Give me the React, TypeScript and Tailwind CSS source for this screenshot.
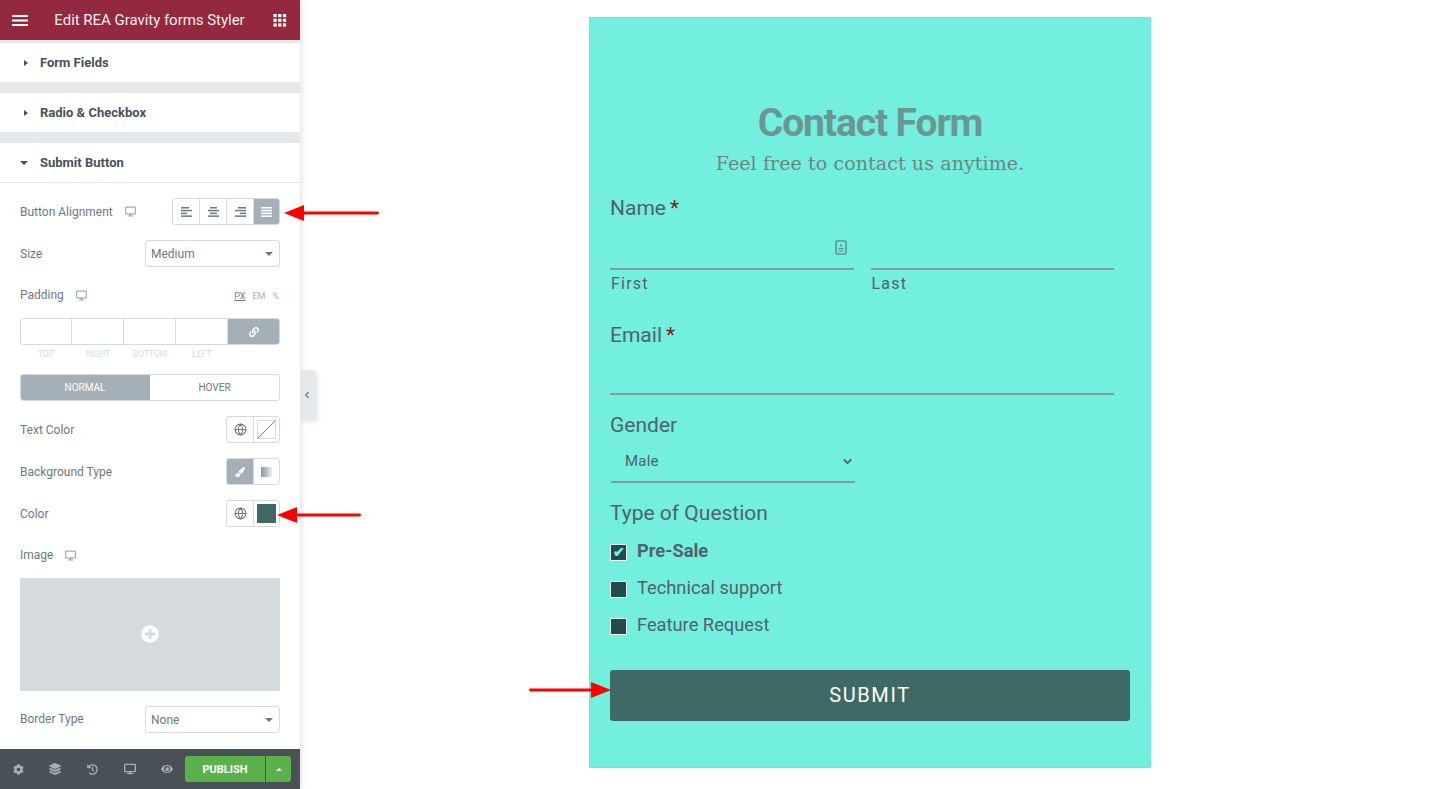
import React from "react";
import { FaDesktop, FaCog, FaLayerGroup, FaHistory, FaEye, FaLink, FaPaintBrush, FaPlusCircle } from "react-icons/fa";
import { Globe, ChevronLeft, ChevronDown } from "lucide-react";

const Caret = () => <span className="block w-0 h-0 border-x-[4px] border-x-transparent border-t-[4px] border-t-[#6d7882]" />;

const Section = ({ title, open }: { title: string; open?: boolean }) => (
  <div className={`h-[39px] bg-white flex items-center pl-[20px] ${open ? "" : "mb-[11px]"}`}>
    <span className="w-[20px] flex items-center">
      {open ? (
        <span className="block w-0 h-0 border-x-[4px] border-x-transparent border-t-[4px] border-t-[#495157]" />
      ) : (
        <span className="block ml-[4px] w-0 h-0 border-y-[3.5px] border-y-transparent border-l-[4px] border-l-[#495157]" />
      )}
    </span>
    <span className="text-[13px] leading-[40px] pt-px font-bold text-[#495157]">{title}</span>
  </div>
);

const Label = ({ children, mt }: { children: React.ReactNode; mt?: boolean }) => (
  <span className="text-[12px] text-[#6d7882] flex items-center">
    {children}
    {mt && <FaDesktop className="ml-[12px] text-[#a4afb7]" size={11} />}
  </span>
);

const AlignIcon = ({ type, color }: { type: string; color: string }) => {
  const rows =
    type === "left" ? [[0, 8], [0, 11], [0, 6], [0, 11]]
    : type === "center" ? [[2, 7], [0, 11], [2, 7], [0, 11]]
    : type === "right" ? [[3, 8], [0, 11], [5, 6], [0, 11]]
    : [[0, 11], [0, 11], [0, 11], [0, 11]];
  return (
    <svg width="11" height="10" viewBox="0 0 11 10">
      {rows.map((r, i) => (
        <rect key={i} x={r[0]} y={i * 2.8} width={r[1]} height="1.5" fill={color} />
      ))}
    </svg>
  );
};

const SelectBox = ({ value }: { value: string }) => (
  <div className="w-[135px] h-[27px] border border-[#d5dadf] rounded-[3px] flex items-center justify-between pl-[5px] pr-[6px] text-[12px] text-[#6d7882]">
    <span>{value}</span>
    <Caret />
  </div>
);

const Arrow = ({ className, left, width }: { className: string; left?: boolean; width: number }) => (
  <svg className={`absolute ${className}`} width={width} height="20" viewBox={`0 0 ${width} 20`}>
    {left ? (
      <>
        <path d={`M0 10 L20 2 L20 18 Z`} fill="#ff0000" />
        <rect x="18" y="8.6" width={width - 18} height="2.8" rx="1.4" fill="#ff0000" />
      </>
    ) : (
      <>
        <rect x="0" y="8.6" width={width - 18} height="2.8" rx="1.4" fill="#ff0000" />
        <path d={`M${width} 10 L${width - 20} 2 L${width - 20} 18 Z`} fill="#ff0000" />
      </>
    )}
  </svg>
);

const PairBox = ({ left, right, leftActive }: { left: React.ReactNode; right: React.ReactNode; leftActive?: boolean }) => (
  <div className="w-[54px] h-[27px] border border-[#d5dadf] rounded-[3px] flex overflow-hidden">
    <div className={`w-[27px] flex items-center justify-center border-r border-[#d5dadf] ${leftActive ? "bg-[#a4afb7]" : ""}`}>{left}</div>
    <div className="flex-1 flex items-center justify-center">{right}</div>
  </div>
);

const Row = ({ className, children }: { className: string; children: React.ReactNode }) => (
  <div className={`flex items-center justify-between ${className}`}>{children}</div>
);

const Sidebar = () => (
  <aside className="relative w-[300px] h-[789px] shrink-0 flex flex-col bg-white shadow-[2px_0_5px_rgba(0,0,0,0.1)]">
    <header className="h-[40px] bg-[#93283e] flex items-center justify-between pl-[12px] pr-[13px] text-white">
      <svg width="17" height="13" viewBox="0 0 17 13" fill="#fff">
        <rect y="1" width="16" height="2" />
        <rect y="5.5" width="16" height="2" />
        <rect y="10" width="16" height="2" />
      </svg>
      <span className="text-[15px] tracking-[-0.03px] text-white/95 mr-[3px]">Edit REA Gravity forms Styler</span>
      <svg width="14" height="13" viewBox="0 0 14 13" fill="#fff">
        {[0, 4.7, 9.4].map((y) =>
          [0.5, 5.2, 9.9].map((x) => <rect key={`${x}-${y}`} x={x} y={y} width="3.2" height="3.2" />)
        )}
      </svg>
    </header>
    <div className="flex-1 bg-[#e6e9ec] pt-[3px] overflow-hidden">
      <Section title="Form Fields" />
      <Section title="Radio & Checkbox" />
      <Section title="Submit Button" open />
      <div className="bg-white h-full border-t border-[#e6e9ec] px-[20px]">
        <Row className="h-[27px] mt-[15px]">
          <Label mt>Button Alignment</Label>
          <div className="w-[108px] h-[27px] border border-[#d5dadf] rounded-[3px] flex overflow-hidden">
            {["left", "center", "right"].map((t) => (
              <div key={t} className="w-[27px] flex items-center justify-center border-r border-[#d5dadf]">
                <AlignIcon type={t} color="#6d7882" />
              </div>
            ))}
            <div className="flex-1 bg-[#a4afb7] flex items-center justify-center">
              <AlignIcon type="justify" color="#ffffff" />
            </div>
          </div>
        </Row>
        <Row className="h-[27px] mt-[15px]">
          <Label>Size</Label>
          <SelectBox value="Medium" />
        </Row>
        <Row className="h-[16px] mt-[20px]">
          <Label mt>Padding</Label>
          <span className="flex gap-[7px] text-[9px] text-[#a4afb7] pr-[1px] mt-[3px]">
            <span className="text-[#6d7882] underline">PX</span>
            <span>EM</span>
            <span>%</span>
          </span>
        </Row>
        <div className="mt-[15px] h-[27px] flex border border-[#d5dadf] rounded-[3px] overflow-hidden">
          <div className="w-[51px] border-r border-[#d5dadf]" />
          {[0, 1, 2].map((i) => (
            <div key={i} className="w-[52px] border-r border-[#d5dadf]" />
          ))}
          <div className="flex-1 bg-[#a4afb7] flex items-center justify-center">
            <FaLink size={10} color="#fff" />
          </div>
        </div>
        <div className="flex mt-[4px] h-[10px] text-[8.5px] leading-[10px] text-[#d5dadf] text-center">
          {["TOP", "RIGHT", "BOTTOM", "LEFT"].map((l) => (
            <span key={l} className="w-[52px]">{l}</span>
          ))}
        </div>
        <div className="mt-[15px] h-[27px] flex border border-[#d5dadf] rounded-[3px] overflow-hidden text-[10px] leading-none">
          <div className="w-[130px] -m-px mr-0 bg-[#a4afb7] text-white flex items-center justify-center">NORMAL</div>
          <div className="flex-1 flex items-center justify-center text-[#6d7882]">HOVER</div>
        </div>
        <Row className="h-[27px] mt-[15px]">
          <Label>Text Color</Label>
          <PairBox
            left={<Globe size={13} color="#6d7882" />}
            right={
              <svg width="19" height="19" viewBox="0 0 19 19">
                <rect x="0.5" y="0.5" width="18" height="18" fill="#fff" stroke="#d5dadf" />
                <path d="M0.6 18 L18 0.6 L18.4 1 L1 18.4 Z" fill="#ff1a1a" />
              </svg>
            }
          />
        </Row>
        <Row className="h-[27px] mt-[15px]">
          <Label>Background Type</Label>
          <PairBox
            leftActive
            left={<FaPaintBrush size={10} color="#fff" />}
            right={<span className="block w-[11px] h-[10px] bg-gradient-to-r from-[#8a949c] to-[#eef0f2]" />}
          />
        </Row>
        <Row className="h-[27px] mt-[15px]">
          <Label>Color</Label>
          <PairBox
            left={<Globe size={13} color="#6d7882" />}
            right={<span className="block w-[19px] h-[19px] bg-[#3f6964]" />}
          />
        </Row>
        <div className="mt-[20px] h-[16px] flex items-center">
          <Label mt>Image</Label>
        </div>
        <div className="mt-[15px] h-[113px] bg-[#d5dadf] flex items-center justify-center pb-[2px]">
          <FaPlusCircle size={18} color="#fff" />
        </div>
        <Row className="h-[27px] mt-[15px]">
          <span className="-mt-[2px]"><Label>Border Type</Label></span>
          <SelectBox value="None" />
        </Row>
      </div>
    </div>
    <footer className="h-[40px] bg-[#495157] flex items-center text-[#a4afb7] pl-[13px]">
      <span className="w-[36px]"><FaCog size={11} /></span>
      <span className="w-[38px]"><FaLayerGroup size={12} /></span>
      <span className="w-[37px]"><FaHistory size={11} /></span>
      <span className="w-[37px]"><FaDesktop size={12} /></span>
      <span className="w-[24px]"><FaEye size={12} /></span>
      <div className="w-[106px] h-[26px] flex rounded-[3px] overflow-hidden bg-[#5cb24a] text-white">
        <div className="w-[81px] flex items-center justify-center pt-[2px] text-[11px] font-bold border-r border-[#495157]">PUBLISH</div>
        <div className="flex-1 flex items-center justify-center">
          <span className="block w-0 h-0 border-x-[3.5px] border-x-transparent border-b-[3.5px] border-b-white" />
        </div>
      </div>
    </footer>
    <Arrow className="left-[284px] top-[203px]" left width={95} />
    <Arrow className="left-[277px] top-[505px]" left width={84} />
    <div className="absolute left-[301px] top-[370px] w-[15px] h-[50px] bg-[#e6e9ec] rounded-r-[3px] shadow-[2px_2px_4px_rgba(0,0,0,0.1)] flex items-center justify-center pr-[3px]">
      <ChevronLeft size={10} strokeWidth={3} color="#6d7882" />
    </div>
  </aside>
);

const FieldLabel = ({ children, star }: { children: React.ReactNode; star?: boolean }) => (
  <div className="text-[21px] leading-[26px] text-[#50636a]">
    {children}
    {star && <span className="text-[#7a1f22] ml-[4px]">*</span>}
  </div>
);

const Check = ({ label, checked }: { label: string; checked?: boolean }) => (
  <div className="flex items-center h-[24px]">
    <span className="mt-[2px] w-[17px] h-[17px] bg-[#224c4c] border border-[#eef4f2] flex items-center justify-center text-[#72efdd] text-[14px] leading-none font-bold">
      {checked ? "✔" : ""}
    </span>
    <span className={`ml-[10px] text-[18.3px] text-[#50636a] ${checked ? "font-bold" : ""}`}>{label}</span>
  </div>
);

const Form = () => (
  <div className="ml-[289px] mt-[17px] w-[562px] h-[751px] shrink-0 bg-[#72efdd] border border-[#74dfec] px-[20px] font-['Roboto',sans-serif]">
    <h1 className="mt-[82px] text-center text-[39px] leading-[46px] font-bold tracking-[-1.1px] text-[#6b9793]">Contact Form</h1>
    <p className="mt-[5px] text-center text-[19px] leading-[24px] text-[#6f8585] font-['DejaVu_Serif',serif] tracking-[0.1px]">Feel free to contact us anytime.</p>
    <div className="mt-[20px]"><FieldLabel star>Name</FieldLabel></div>
    <div className="flex gap-[17px] mt-[25px] w-[504px]">
      <div className="w-[243.5px] relative">
        <div className="h-[22px] border-b-2 border-[#7f9e9b] box-content" />
        <svg className="absolute right-[7px] top-[-6px]" width="12" height="15" viewBox="0 0 12 15">
          <rect x="1" y="1" width="10" height="13" rx="1" fill="none" stroke="#5f9490" strokeWidth="1.6" />
          <path d="M6 3.5 L7.4 6.5 L4.6 6.5 Z M3.4 8 H8.6 V9.2 H3.4 Z M3.4 10.4 H8.6 V11.6 H3.4 Z" fill="#5f9490" />
        </svg>
        <div className="mt-[4px] text-[16px] leading-[20px] tracking-[1.2px] text-[#50636a] pl-px">First</div>
      </div>
      <div className="w-[243.5px]">
        <div className="h-[22px] border-b-2 border-[#7f9e9b] box-content" />
        <div className="mt-[4px] text-[16px] leading-[20px] tracking-[1.2px] text-[#50636a] pl-px">Last</div>
      </div>
    </div>
    <div className="mt-[28px]"><FieldLabel star>Email</FieldLabel></div>
    <div className="mt-[24px] w-[504px] h-[23px] border-b-2 border-[#7f9e9b]" />
    <div className="mt-[17px]"><FieldLabel>Gender</FieldLabel></div>
    <div className="mt-[11px] ml-px w-[244px] h-[34px] border-b-2 border-[#7f9e9b] flex items-center justify-between pl-[14px] pr-px pb-[8px] text-[15px] tracking-[0.2px] text-[#50636a]">
      <span>Male</span>
      <ChevronDown size={13} strokeWidth={3.5} color="#50636a" />
    </div>
    <div className="mt-[17px]"><FieldLabel>Type of Question</FieldLabel></div>
    <div className="mt-[13px] flex flex-col gap-[13px]">
      <Check label="Pre-Sale" checked />
      <Check label="Technical support" />
      <Check label="Feature Request" />
    </div>
    <button className="mt-[33px] w-[520px] h-[51px] rounded-[3px] bg-[#3f6964] text-white pb-[2px] text-[20px] tracking-[1.6px] flex items-center justify-center">SUBMIT</button>
  </div>
);

export default function App() {
  return (
    <div className="relative w-[1440px] h-[789px] overflow-hidden bg-white flex items-start font-['Roboto',sans-serif]">
      <Sidebar />
      <Form />
      <Arrow className="left-[529px] top-[680px]" width={82} />
    </div>
  );
}
